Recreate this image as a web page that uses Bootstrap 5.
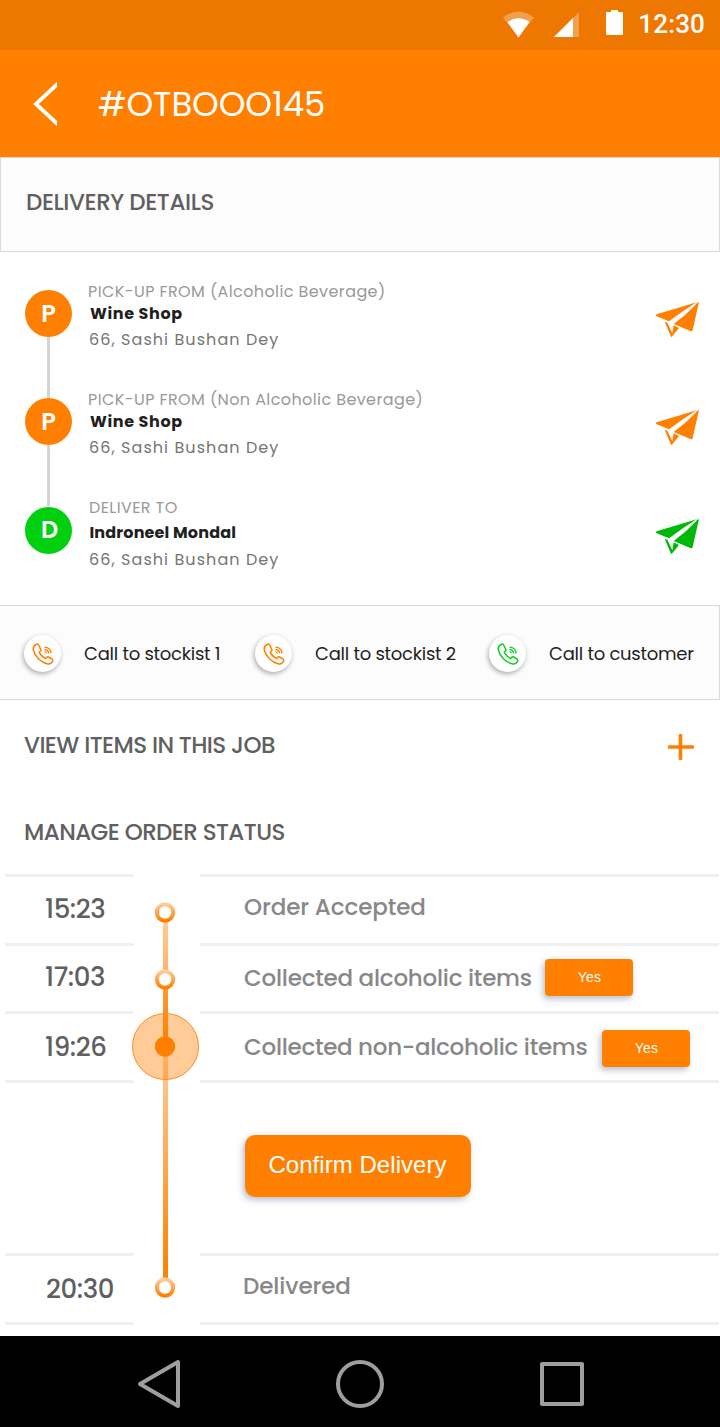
<!DOCTYPE html>
<html lang="en">
<head>
<meta charset="utf-8">
<meta name="viewport" content="width=device-width, initial-scale=1">
<title>Order #OTBOOO145</title>
<link href="https://cdn.jsdelivr.net/npm/bootstrap@5.3.0/dist/css/bootstrap.min.css" rel="stylesheet">
<style>
  :root { --brand: #ff8000; --ok: #00d010; }
  body { font-family: Poppins, Inter, "Open Sans", sans-serif; color: #1f1f1f; background: #fff; width: 720px; overflow-x: hidden; }
  span, h1, h2 { white-space: nowrap; }
  .statusbar { height: 50px; background: #ed7700; }
  .clock { font: 500 26px/30px Roboto, sans-serif; letter-spacing: .15px; margin: 9px 15px 0 3px; }
  .topbar { height: 107px; background: var(--brand); }
  .topbar h1 { font-size: 34px; line-height: 40px; font-weight: 400; letter-spacing: -.1px; margin-left: 41px; }
  .back { margin-left: 33px; }
  .panel { height: 95px; background: #fcfcfc; border: 1px solid #d9d9d9; }
  .panel-title { padding: 29px 0 0 25px; }
  .panel-calls { padding: 2px 0 0 24px; }
  .heading { font-size: 23px; line-height: 30px; font-weight: 500; color: #606060; letter-spacing: -.58px; }
  .panel .heading { letter-spacing: -.42px; }
  .stops { height: 353px; padding: 30px 21px 0 25px; }
  .stop { height: 108px; }
  .track { width: 47px; padding-top: 8px; margin-bottom: -8px; }
  .marker { width: 47px; height: 47px; background: var(--brand); font-weight: 600; font-size: 24px; line-height: 47px; }
  .link-line { width: 3px; background: #d4d4d4; }
  .info { padding-left: 16px; font-size: 16px; }
  .info .lbl { color: #999; line-height: 19px; letter-spacing: .4px; }
  .info .who { font-weight: 700; line-height: 25px; letter-spacing: .6px; padding-left: 2px; }
  .info .addr { color: #757575; line-height: 27px; letter-spacing: 1.07px; padding-left: 1px; }
  .last-stop .track { padding-top: 9px; }
  .last-stop .marker { background: var(--ok); line-height: 46px; padding-left: 2px; }
  .last-stop .lbl { padding-left: 1px; }
  .last-stop .who { line-height: 31px; letter-spacing: .15px; padding-left: 1.5px; }
  .last-stop .addr { line-height: 23px; }
  .plane { margin-top: 20px; width: 43px; height: 35px; fill: var(--brand); }
  .last-stop .plane { margin-top: 21px; fill: #00b809; }
  .call { font-size: 18px; line-height: 24px; letter-spacing: -.27px; }
  .call-1 { width: 231px; }
  .call-2 { width: 234px; }
  .call-ico { width: 37px; height: 37px; background: #fff; color: var(--brand); box-shadow: -1px 2px 5px rgba(0,0,0,.32); margin-right: 23px; }
  .call-ok { color: #10d020; }
  .job { height: 174px; padding: 30px 26px 0 24px; }
  .job-row { height: 87px; }
  .timeline { height: 462px; padding: 0 1px 0 5px; }
  .cell { border-top: 3px solid #f0f0f0; height: 69px; }
  .cell-68 { height: 68px; }
  .cell-tall { height: 173px; }
  .cell-end { height: 3px; }
  .times { width: 129px; }
  .times .cell { font-size: 26px; line-height: 30px; font-weight: 500; color: #606060; padding: 17px 0 0 40px; letter-spacing: -.45px; }
  .times .cell-68 { padding-top: 16px; }
  .times .cell-low { padding-top: 18px; }
  .times .cell-last { padding: 18px 0 0 41px; }
  .times .cell-tall, .times .cell-end, .steps .cell-end { padding: 0; }
  .steps .cell { font-size: 23px; line-height: 30px; font-weight: 500; color: #888; padding: 15px 0 0 44px; letter-spacing: -.1px; }
  .steps .cell-68 { padding-top: 13px; letter-spacing: -.23px; }
  .steps .cell-68 span { margin-top: 4px; width: 301px; }
  .steps .cell-low { padding-top: 16px; letter-spacing: -.28px; }
  .steps .cell-low span { margin-top: 2px; width: 358px; }
  .steps .cell-tall { padding: 52px 0 0 45px; }
  .steps .cell-last { padding-left: 43px; }
  .steps .cell-end { padding: 0; }
  .btn-brand { background: var(--brand); color: #fff; border: 0; font-family: "Liberation Sans", Arial, sans-serif; box-shadow: -2px 3px 6px rgba(70,90,130,.38); }
  .btn-yes { width: 88px; height: 37px; padding: 0 0 2px 1px; font-size: 14px; line-height: 34px; border-radius: 4px; letter-spacing: .3px; }
  .btn-confirm { width: 226px; height: 62px; padding: 0 1px 2px 0; font-size: 24px; line-height: 58px; letter-spacing: .05px; border-radius: 10px; }
  .navkeys { height: 91px; background: #000; }
</style>
</head>
<body>
<svg class="d-none">
  <symbol id="plane" viewBox="48 66 129 105">
    <path d="M50 103 170 66.500Q127 93 87 124L50 109Q46 105 50 103ZM171 69 177 66 158 150Q156 155 151 153L101 132Q138 105 166 75ZM74 125 82 128 97 160 101 136 117 144 97 169Q94 173 92 168Z"/>
  </symbol>
  <symbol id="phone" viewBox="0 0 22 22">
    <path d="M4.500 1.200C2 2.400.7 4.300 1.400 7.200 3 13.500 8.500 19 15 20.700c2.700.7 4.700-.6 5.700-2.700.4-1-.1-1.500-.8-2l-3.300-2c-.9-.5-1.500-.2-2 .5l-1 1.100c-3-1.300-5-3.500-6.400-6.400l1.100-1c.7-.6.9-1.200.4-2L6.600 2c-.6-1-1.200-1.200-2.100-.8Z" fill="none" stroke="currentColor" stroke-width="1.500"/>
    <path d="M12.500 4.200c3.800.2 6.300 2.600 6.500 6.300M12.500 6.500c2.600.2 4 1.600 4.200 3.900M12.500 8.700c1.200.1 1.800.7 1.900 1.700" fill="none" stroke="currentColor" stroke-width="1.300"/>
  </symbol>
</svg>

<div class="statusbar d-flex align-items-start justify-content-end text-white">
  <svg width="135" height="50" viewBox="0 0 135 50">
    <path d="M3 17.500Q18.500 5.500 34 17.500L18.500 37Z" fill="#fff" opacity=".3"/>
    <path d="M7.500 22Q18.500 14.500 29.500 22L18.500 37.500Z" fill="#fff"/>
    <path d="M79 12V37H54Z" fill="#fff" opacity=".3"/>
    <path d="M73 18V37H54Z" fill="#fff"/>
    <path d="M122 12h-4v-2h-7v2h-4a1 1 0 0 0-1 1V34a1 1 0 0 0 1 1H122a1 1 0 0 0 1-1V13a1 1 0 0 0-1-1Z" fill="#fff"/>
  </svg>
  <span class="clock">12:30</span>
</div>

<header class="topbar d-flex align-items-center text-white">
  <svg class="back" width="24" height="44" viewBox="0 0 24 44"><path d="M25 1.500 3 22 25 42.500" fill="none" stroke="#fff" stroke-width="3.800"/></svg>
  <h1 class="mb-0">#OTBOOO145</h1>
</header>

<section class="panel panel-title"><h2 class="heading mb-0">DELIVERY DETAILS</h2></section>

<section class="stops">
  <div class="stop d-flex">
    <div class="track d-flex flex-column align-items-center"><div class="marker rounded-circle text-white text-center">P</div><div class="link-line flex-grow-1"></div></div>
    <div class="info d-flex flex-column flex-grow-1"><span class="lbl">PICK-UP FROM (Alcoholic Beverage)</span><span class="who">Wine Shop</span><span class="addr">66, Sashi Bushan Dey</span></div>
    <svg class="plane"><use href="#plane"/></svg>
  </div>
  <div class="stop d-flex">
    <div class="track d-flex flex-column align-items-center"><div class="marker rounded-circle text-white text-center">P</div><div class="link-line flex-grow-1"></div></div>
    <div class="info d-flex flex-column flex-grow-1"><span class="lbl">PICK-UP FROM (Non Alcoholic Beverage)</span><span class="who">Wine Shop</span><span class="addr">66, Sashi Bushan Dey</span></div>
    <svg class="plane"><use href="#plane"/></svg>
  </div>
  <div class="stop last-stop d-flex">
    <div class="track"><div class="marker rounded-circle text-white text-center">D</div></div>
    <div class="info d-flex flex-column flex-grow-1"><span class="lbl">DELIVER TO</span><span class="who">Indroneel Mondal</span><span class="addr">66, Sashi Bushan Dey</span></div>
    <svg class="plane"><use href="#plane"/></svg>
  </div>
</section>

<section class="panel panel-calls border-start-0 d-flex align-items-center">
  <div class="call call-1 d-flex align-items-center"><div class="call-ico rounded-circle d-flex align-items-center justify-content-center"><svg width="22" height="22"><use href="#phone"/></svg></div><span>Call to stockist 1</span></div>
  <div class="call call-2 d-flex align-items-center"><div class="call-ico rounded-circle d-flex align-items-center justify-content-center"><svg width="22" height="22"><use href="#phone"/></svg></div><span>Call to stockist 2</span></div>
  <div class="call d-flex align-items-center"><div class="call-ico call-ok rounded-circle d-flex align-items-center justify-content-center"><svg width="22" height="22"><use href="#phone"/></svg></div><span>Call to customer</span></div>
</section>

<section class="job">
  <div class="job-row d-flex justify-content-between">
    <h2 class="heading mb-0">VIEW ITEMS IN THIS JOB</h2>
    <svg class="mt-1" width="26" height="26" viewBox="0 0 26 26"><path d="M12.500 1.500v23M1.500 13h23" stroke="#ff8000" stroke-width="3.600" stroke-linecap="round"/></svg>
  </div>
  <h2 class="heading mb-0">MANAGE ORDER STATUS</h2>
</section>

<section class="timeline d-flex">
  <div class="times">
    <div class="cell">15:23</div>
    <div class="cell cell-68">17:03</div>
    <div class="cell cell-low">19:26</div>
    <div class="cell cell-tall"></div>
    <div class="cell cell-last">20:30</div>
    <div class="cell cell-end"></div>
  </div>
  <svg class="overflow-visible flex-shrink-0" width="66" height="451" viewBox="134 874 66 451">
    <defs>
      <linearGradient id="ring" x1="0" y1="0" x2="0" y2="1"><stop offset="0" stop-color="#ffcc99"/><stop offset="1" stop-color="#ff8000"/></linearGradient>
      <linearGradient id="g1" x1="0" y1="0" x2="0" y2="1"><stop offset="0" stop-color="#ffcc99"/><stop offset="1" stop-color="#ffb266"/></linearGradient>
      <linearGradient id="g2" x1="0" y1="0" x2="0" y2="1"><stop offset="0" stop-color="#ff9a34"/><stop offset="1" stop-color="#ff8000"/></linearGradient>
    </defs>
    <rect x="163" y="922" width="5" height="48" fill="url(#g1)"/>
    <rect x="163" y="1056" width="5" height="222" fill="url(#ring)"/>
    <circle cx="165.500" cy="1046.500" r="33" fill="#ff8000" fill-opacity=".4" stroke="#ff8c1a"/>
    <rect x="163" y="989" width="5" height="50" fill="url(#g2)"/>
    <circle cx="165" cy="1046.500" r="10.200" fill="#ff8000"/>
    <g fill="#fff" stroke="url(#ring)" stroke-width="4">
      <circle cx="165" cy="912.500" r="8.200"/><circle cx="165" cy="979.500" r="8.200"/><circle cx="165" cy="1287.500" r="8.200"/>
    </g>
  </svg>
  <div class="steps flex-grow-1">
    <div class="cell">Order Accepted</div>
    <div class="cell cell-68 d-flex align-items-start"><span>Collected alcoholic items</span><button class="btn btn-brand btn-yes">Yes</button></div>
    <div class="cell cell-low d-flex align-items-start"><span>Collected non-alcoholic items</span><button class="btn btn-brand btn-yes">Yes</button></div>
    <div class="cell cell-tall"><button class="btn btn-brand btn-confirm">Confirm Delivery</button></div>
    <div class="cell cell-last">Delivered</div>
    <div class="cell cell-end"></div>
  </div>
</section>

<nav class="navkeys">
  <svg width="720" height="91" viewBox="0 1336 720 91" fill="none" stroke="#9e9e9e" stroke-width="4" stroke-linejoin="round"><path d="M140 1384 178 1362V1406Z"/><circle cx="360" cy="1384" r="22"/><rect x="542" y="1364" width="40" height="40"/></svg>
</nav>
<script src="https://cdn.jsdelivr.net/npm/bootstrap@5.3.0/dist/js/bootstrap.bundle.min.js"></script>
</body>
</html>
